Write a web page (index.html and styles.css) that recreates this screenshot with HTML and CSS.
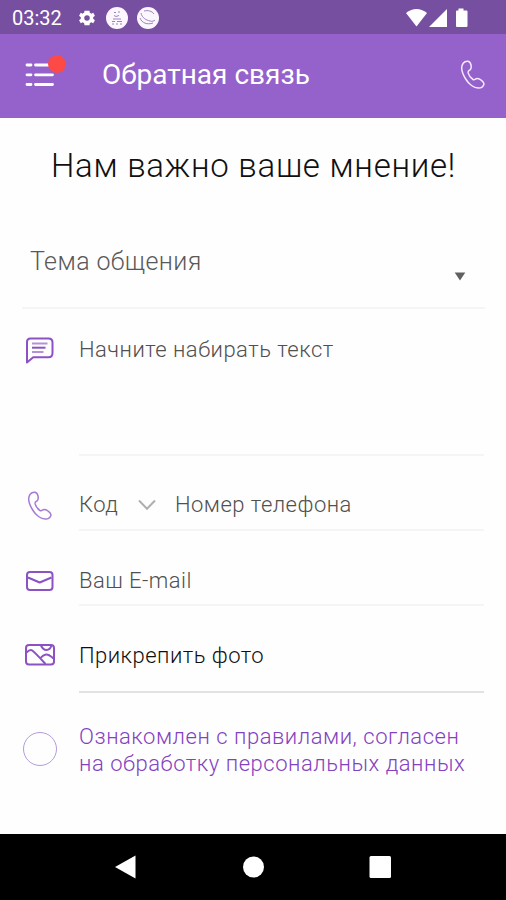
FILE: index.html
```html
<!DOCTYPE html>
<html lang="ru">
<head>
  <meta charset="UTF-8" />
  <meta name="viewport" content="width=device-width, initial-scale=1" />
  <title>Обратная связь</title>
  <link rel="stylesheet" href="styles.css">
</head>
<body>
  <!-- общий контур телефонной трубки -->
  <svg class="symbols" width="0" height="0">
    <symbol id="handset" viewBox="0 0 26 30">
      <path d="M3.2 3.2C4.500 1.500 6.500 1 8 1.200C9.600 1.500 10.600 3 11 5C11.400 7 11.400 8.800 10 9.900C8.600 10.900 7.700 11.300 8.100 12.900C8.900 15.600 10.700 18 13 19.500C14.300 20.300 15 19.400 16.300 18.700C18 17.900 20 19.100 21.700 20.500C23.300 21.900 24.600 23 23.800 24.700C22.900 26.700 20.700 28.200 18.300 28.100C14 28 8.800 24.200 5.700 19C2.600 14 .3 7 3.200 3.200Z" />
    </symbol>
  </svg>

  <div class="screen">
    <div class="status-bar">
      <span class="time">03:32</span>
      <svg class="gear" width="20" height="20" viewBox="0 0 24 24"><path fill-rule="evenodd" d="M19.400 13a7.800 7.800 0 0 0 0-2l2.100-1.700-2-3.500-2.500 1a7.300 7.300 0 0 0-1.700-1L15 3.200H9l-.4 2.600a7.300 7.300 0 0 0-1.700 1l-2.400-1-2 3.500L4.600 11a7.800 7.800 0 0 0 0 2l-2.100 1.700 2 3.500 2.400-1a7.300 7.300 0 0 0 1.700 1l.4 2.600h6l.3-2.600a7.300 7.300 0 0 0 1.700-1l2.500 1 2-3.500zM12 15.300a3.300 3.300 0 1 1 0-6.600 3.300 3.300 0 0 1 0 6.600z"/></svg>
      <svg class="app-badge" width="22" height="22" viewBox="0 0 22 22">
        <circle cx="11" cy="11" r="11" />
        <path d="M8 5.500h2M12 5h2M8 8.500l2 1 3-1M7 12h8M6 14.500h3M11 14.500h5M6 17h2M10 17h2M14 17h2" />
      </svg>
      <svg class="app-badge" width="22" height="22" viewBox="0 0 22 22">
        <circle cx="11" cy="11" r="11" />
        <path d="M4 6c1 5 5 7 9 8 2 .6 4 .2 5-1M3 11c2 5 7 7 13 5M7 4c4-1 8 0 10 3" />
      </svg>
      <svg class="signals" width="64" height="22" viewBox="0 0 64 22">
        <path d="M0 6Q10.500-2 21 6L10.500 19.500Z" />
        <path d="M41 2V20H23Z" />
        <path d="M52.500 1.500h5v2h3q1 0 1 1V19q0 1-1 1H51q-1 0-1-1V4.500q0-1 1-1h1.500z" />
      </svg>
    </div>

    <div class="app-bar">
      <div class="menu">
        <svg width="30" height="26" viewBox="0 0 30 26">
          <path d="M2 3H6M10.500 3H27.500M2 12.800H6M10.500 12.800H27.500M2 22.500H6M10.500 22.500H27.500" />
        </svg>
        <span class="menu-dot"></span>
      </div>
      <span class="title">Обратная связь</span>
      <svg class="call" width="26" height="30"><use href="#handset" /></svg>
    </div>

    <div class="content">
      <h1>Нам важно ваше мнение!</h1>

      <div class="topic">
        <span class="topic-text">Тема общения</span>
        <svg width="12" height="9" viewBox="0 0 12 9"><path d="M.7.500h10.600L6 8.500z" /></svg>
      </div>

      <div class="row message">
        <svg class="icon" width="28" height="27" viewBox="0 0 28 27">
          <path d="M1 25.500V5Q1 1.500 4.500 1.500H22.500Q26.500 1.500 26.500 5.500V16Q26.500 20.300 22.500 20.300H7.200Z" />
          <path class="soft" d="M6 6.500H21.500M6 15H17.500" />
          <path d="M6 10.700H19.500" />
        </svg>
        <div class="field">Начните набирать текст</div>
      </div>

      <div class="row phone">
        <svg class="icon thin" width="26" height="30"><use href="#handset" /></svg>
        <div class="field">
          <span class="code">Код</span>
          <svg class="chevron" width="18" height="12" viewBox="0 0 18 12"><path d="M1 1.500L9 9.800 17 1.500" /></svg>
          <span class="number">Номер телефона</span>
        </div>
      </div>

      <div class="row email">
        <svg class="icon" width="28" height="20" viewBox="0 0 28 20">
          <rect x="1" y="1" width="25.500" height="18" rx="3" />
          <path d="M2 6.500L13.700 11.500 25.500 6.500" />
        </svg>
        <div class="field">Ваш E-mail</div>
      </div>

      <div class="row photo">
        <svg class="icon" width="30" height="22" viewBox="0 0 30 22">
          <rect x="1" y="1" width="28" height="19.500" rx="3" />
          <path d="M1.500 8.500Q5 5 7 6.300Q10 8.500 20.500 20M15.500 14Q18 10.800 21 10.500Q24 10.300 28.500 14.500M16 1.500Q18 6 21.500 6Q25 6 26.500 1.500" />
        </svg>
        <div class="field">Прикрепить фото</div>
      </div>

      <div class="consent">
        <span class="radio"></span>
        <p>Ознакомлен с правилами, согласен<br>на обработку персональных данных</p>
      </div>
    </div>

    <!-- системная навигация -->
    <div class="nav-bar">
      <svg width="22" height="26" viewBox="0 0 22 26"><path d="M20.500 1.500V24.500L0 13Z" /></svg>
      <svg width="22" height="22" viewBox="0 0 22 22"><circle cx="11.500" cy="11" r="10.500" /></svg>
      <svg width="22" height="22" viewBox="0 0 22 22"><rect x=".5" width="21.500" height="22" rx="1.500" /></svg>
    </div>
  </div>
</body>
</html>
```
FILE: styles.css
```css
* {
  box-sizing: border-box;
}

body {
  margin: 0;
  font-family: Roboto, "Noto Sans", sans-serif;
  background-color: #fefefe;
}

svg {
  display: block;
  flex: none;
}

.symbols {
  position: absolute;
}

.screen {
  height: 900px;
  display: flex;
  flex-direction: column;
  overflow: hidden;
}

/* Верхняя системная строка */
.status-bar {
  height: 34px;
  flex: none;
  display: flex;
  align-items: center;
  padding: 1px 36px 0 12px;
  background-color: #774fa0;
  color: #fff;
}

.time {
  width: 65px;
  font-size: 20px;
}

.gear, .signals {
  fill: #fff;
}

.app-badge {
  margin-left: 9px;
  fill: #fbf6ff;
  stroke: #9c85b5;
  stroke-width: 1;
}

.app-badge circle {
  stroke: none;
}

.signals {
  margin-left: auto;
}

/* Шапка приложения */
.app-bar {
  height: 84px;
  flex: none;
  display: flex;
  align-items: center;
  padding: 0 20px 3px 25px;
  background-color: #9562cb;
  color: #fff;
}

.menu {
  position: relative;
  width: 77px;
}

.menu path {
  fill: none;
  stroke: #fff;
  stroke-width: 2.8;
  stroke-linecap: round;
}

.menu-dot {
  position: absolute;
  left: 23px;
  top: -7px;
  width: 18px;
  height: 18px;
  border-radius: 50%;
  background-color: #fd4a46;
}

.title {
  font-size: 28px;
}

.call {
  margin-left: auto;
  fill: none;
  stroke: #f5eaff;
  stroke-width: 1.5;
}

/* Форма */
.content {
  flex: 1;
  padding: 0 21px 0 22px;
}

h1 {
  margin: 0;
  height: 95px;
  line-height: 95px;
  text-align: center;
  white-space: nowrap;
  font-size: 33px;
  font-weight: 350;
  letter-spacing: 0.75px;
  color: #101010;
}

.topic {
  height: 96px;
  display: flex;
  justify-content: space-between;
  padding: 33px 19px 0 8px;
  border-bottom: 2px solid #f5f5f5;
  font-size: 25px;
  font-weight: 350;
  letter-spacing: 0.4px;
  line-height: 32px;
  color: #595959;
}

.topic svg {
  margin-top: 26px;
  fill: #606060;
}

.row {
  display: flex;
}

.icon {
  fill: none;
  stroke: #8c52c4;
  stroke-width: 2;
  stroke-linejoin: round;
  margin-left: 4px;
}

.icon .soft {
  stroke: #b491d9;
}

.icon.thin {
  stroke: #a47bd3;
  stroke-width: 1.5;
}

.field {
  width: 405px;
  flex: none;
  margin-left: auto;
  margin-right: 1px;
  border-bottom: 2px solid #f5f5f5;
  font-size: 22px;
  font-weight: 350;
  letter-spacing: 0.48px;
  line-height: 30px;
  color: #505050;
}

.message {
  height: 147px;
}

.message .icon {
  margin-top: 28px;
}

.message .field {
  padding-top: 26px;
}

.phone {
  height: 75px;
}

.phone .icon {
  margin: 35px 0 0 5px;
}

.phone .field {
  display: flex;
  padding-top: 34px;
}

.code {
  width: 59px;
}

.chevron {
  margin: 9px 19px 0 0;
  fill: none;
  stroke: #b0b0b0;
  stroke-width: 2;
}

.email {
  height: 75px;
}

.email .icon {
  margin-top: 40px;
}

.email .field {
  padding-top: 35px;
}

.photo {
  height: 87px;
}

.photo .icon {
  margin: 38px 0 0 3px;
}

.photo .field {
  padding-top: 35px;
  border-color: #e2e2e2;
  color: #101010;
}

.consent {
  display: flex;
  padding: 31px 0 0 1px;
  color: #8342c0;
}

.radio {
  width: 34px;
  height: 34px;
  flex: none;
  margin-top: 8px;
  border: 1.5px solid #b59bd9;
  border-radius: 50%;
}

.consent p {
  margin: 0 0 0 22px;
  white-space: nowrap;
  font-size: 22px;
  font-weight: 350;
  letter-spacing: 0.54px;
  line-height: 26.500px;
}

/* Нижняя панель Android */
.nav-bar {
  height: 66px;
  flex: none;
  display: flex;
  align-items: center;
  justify-content: space-between;
  padding: 0 115px;
  background-color: #000;
  fill: #fff;
}
```
